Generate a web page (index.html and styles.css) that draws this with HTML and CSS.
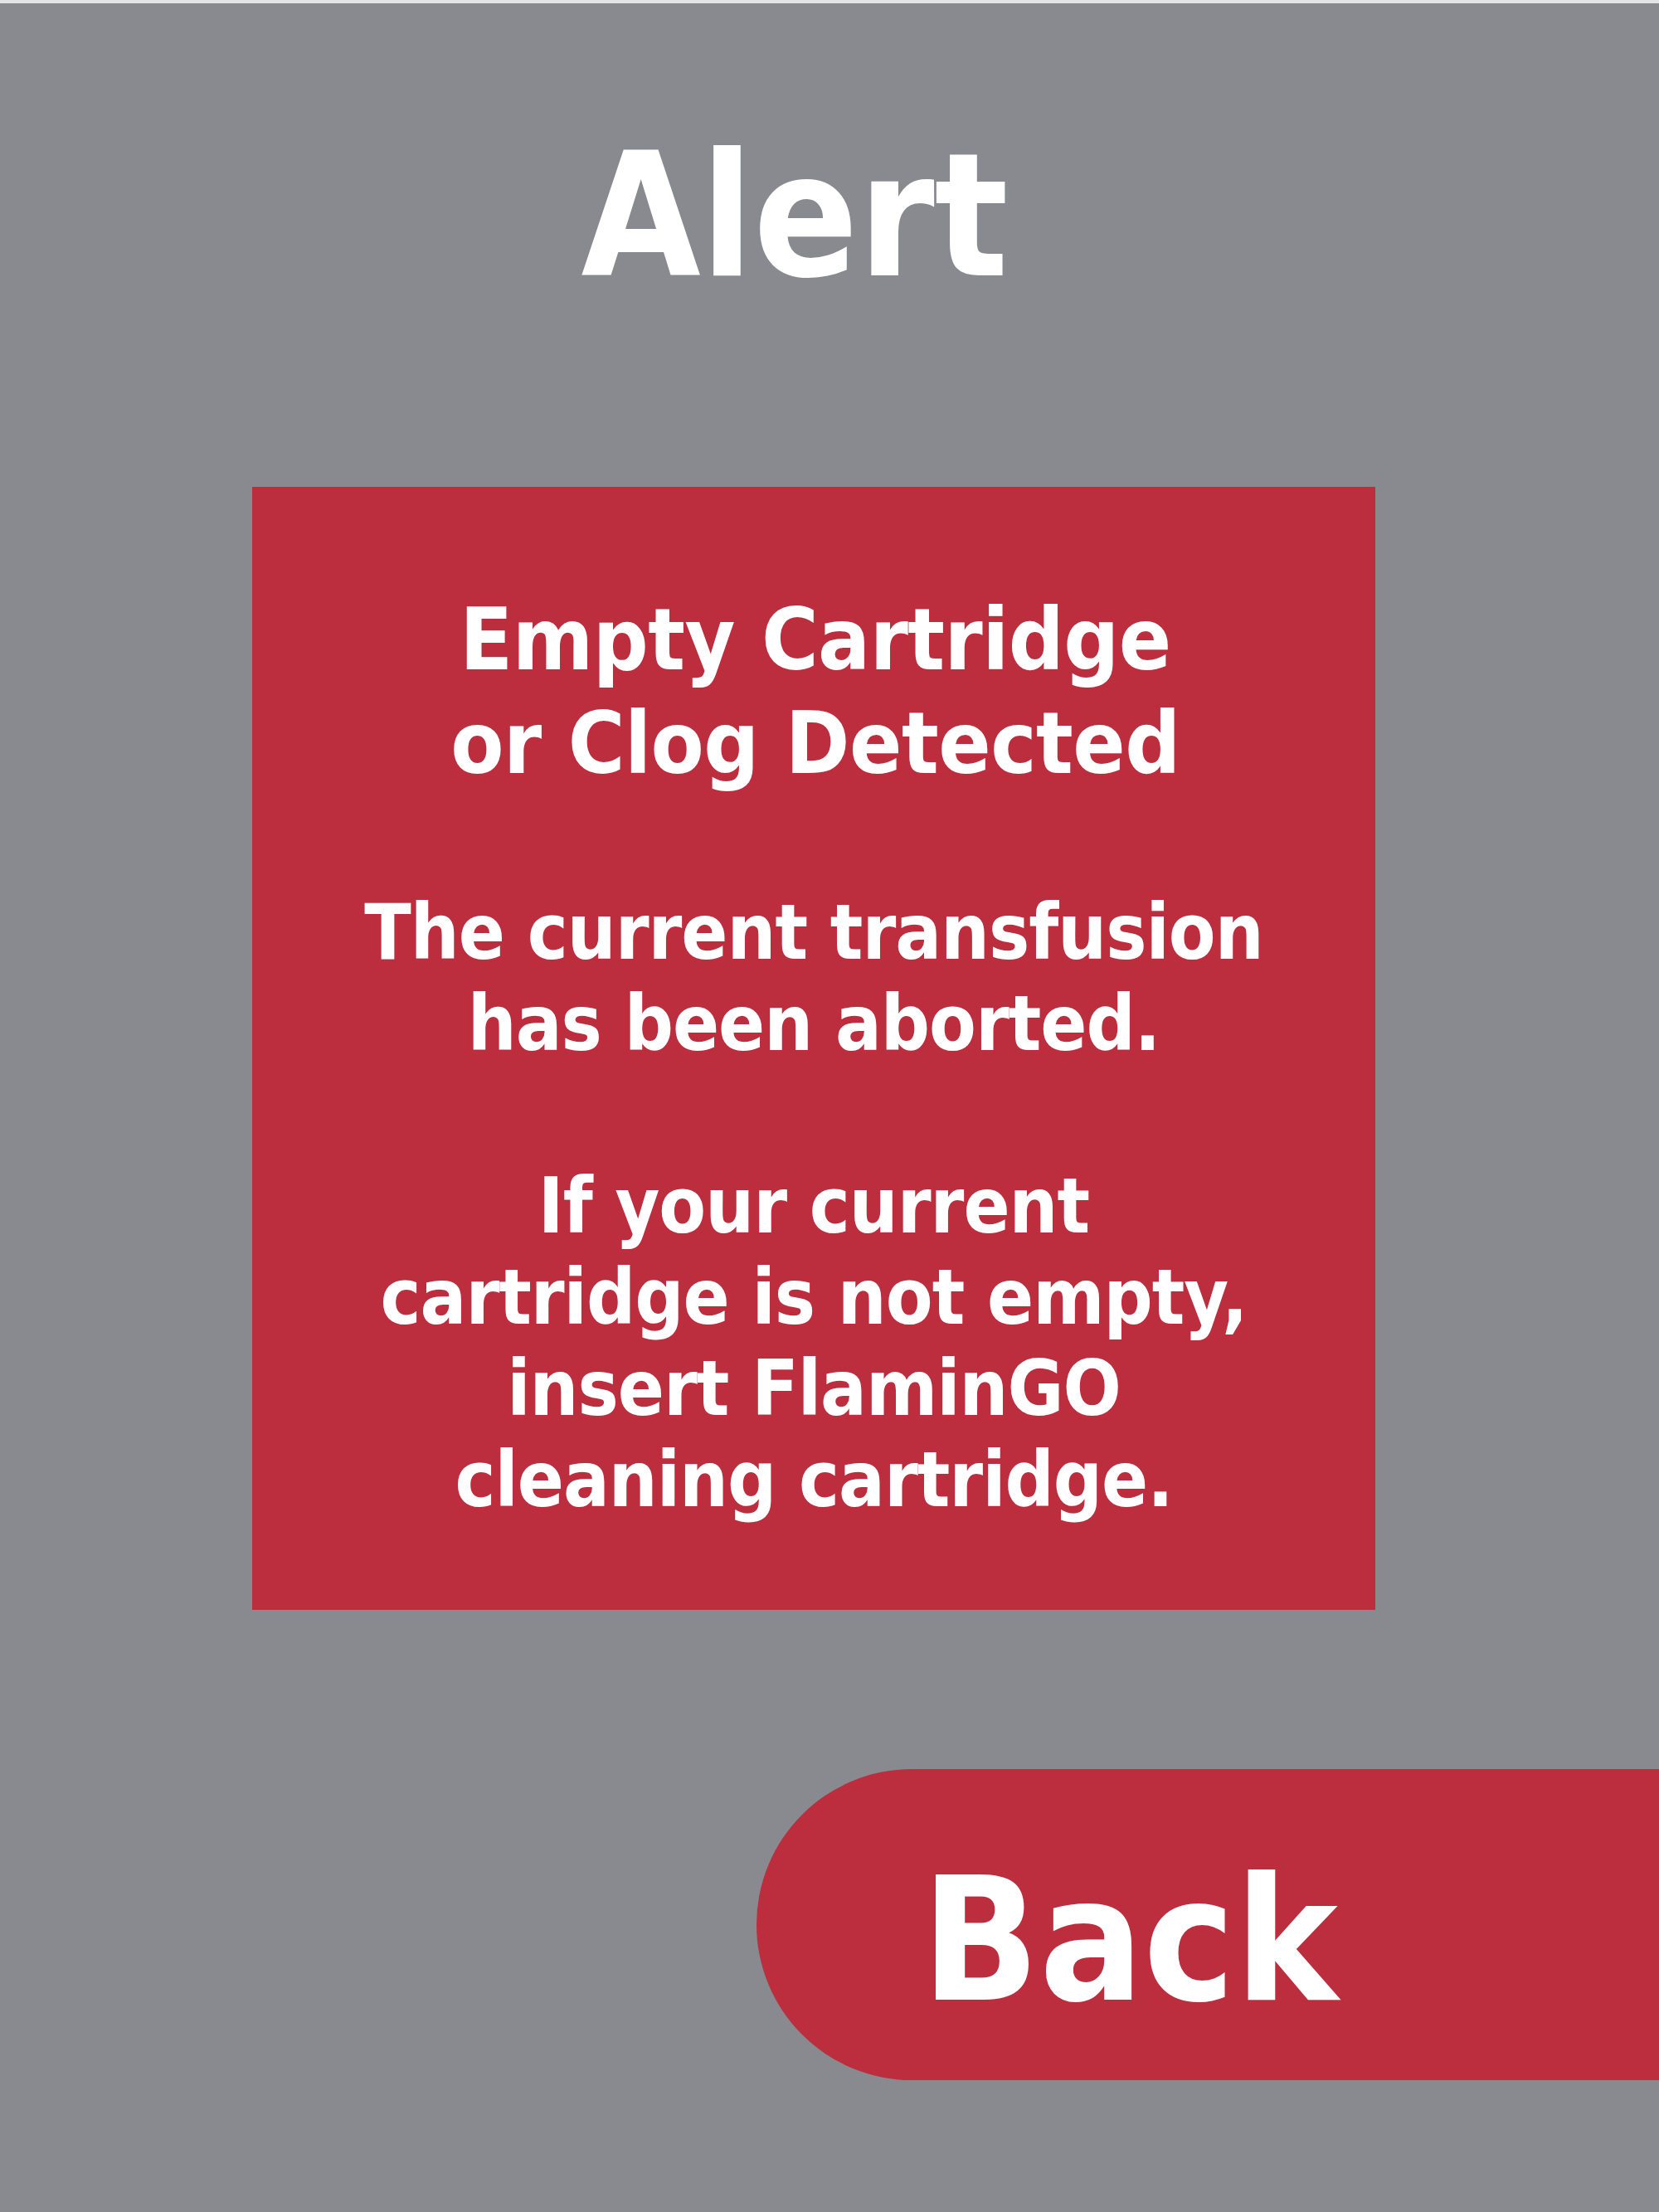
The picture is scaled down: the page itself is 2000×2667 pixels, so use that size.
FILE: index.html
```html
<!DOCTYPE html>
<html lang="en">
<head>
<meta charset="utf-8">
<title>Alert</title>
<link rel="stylesheet" href="styles.css">
</head>
<body>
<div class="screen">
  <div class="top-edge"></div>
  <h1 class="title">Alert</h1>
  <section class="alert-box">
    <h2 class="alert-heading">Empty Cartridge<br>or Clog Detected</h2>
    <p class="alert-text">The current transfusion<br>has been aborted.</p>
    <p class="alert-text alert-text-last">If your current<br>cartridge is not empty,<br>insert FlaminGO<br>cleaning cartridge.</p>
  </section>
  <div class="actions">
    <button class="back-button" type="button">Back</button>
  </div>
</div>
</body>
</html>
```
FILE: styles.css
```css
html, body {
  margin: 0;
  padding: 0;
}

body {
  background: #898a8f;
  font-family: "DejaVu Sans", "Liberation Sans", sans-serif;
  font-weight: bold;
  font-stretch: condensed;
  color: #ffffff;
}

.screen {
  width: 2000px;
  height: 2667px;
  overflow: hidden;
  display: flex;
  flex-direction: column;
}

.top-edge {
  height: 4px;
  background: #e4e4e6;
}

.title {
  margin: 132px 0 0 0;
  padding-right: 84px;
  font-size: 207px;
  line-height: 250px;
  font-weight: bold;
  text-align: center;
}

.alert-box {
  margin: 201px 0 0 304px;
  width: 1354px;
  height: 1354px;
  box-sizing: border-box;
  padding-top: 122px;
  background: #bc2e3d;
  text-align: center;
}

.alert-heading {
  margin: 0;
  font-size: 104px;
  line-height: 125px;
  font-weight: bold;
  letter-spacing: -0.5px;
  padding-left: 4px;
}

.alert-text {
  margin: 111px 0 0 0;
  font-size: 92px;
  line-height: 110px;
  letter-spacing: -1px;
}

.alert-text-last {
  margin-top: 110px;
}

.actions {
  display: flex;
  justify-content: flex-end;
  margin-top: 192px;
}

.back-button {
  width: 1088px;
  height: 375px;
  box-sizing: border-box;
  border: none;
  border-radius: 190px 0 0 190px;
  background: #bc2e3d;
  color: #ffffff;
  font-family: inherit;
  font-weight: bold;
  font-stretch: condensed;
  font-size: 207px;
  line-height: 250px;
  text-align: left;
  padding: 0 0 43px 199px;
  display: flex;
  align-items: flex-end;
}
```
